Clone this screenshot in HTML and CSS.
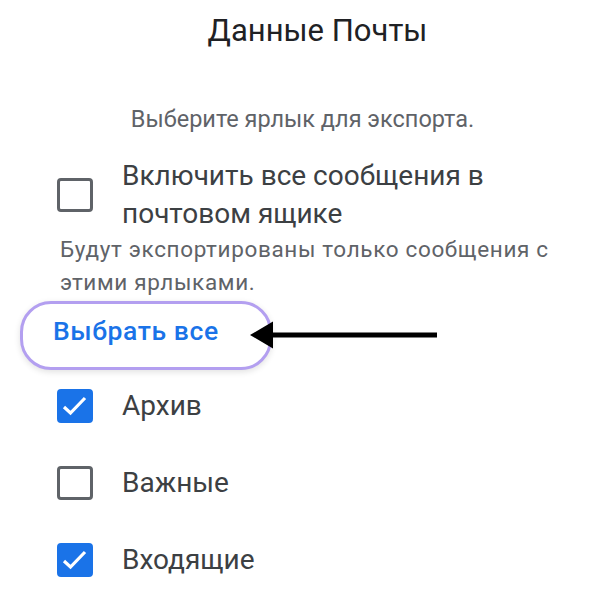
FILE: index.html
```html
<!DOCTYPE html>
<html>
<head>
<meta charset="utf-8" />
<title>Данные Почты</title>
<link rel="stylesheet" href="styles.css">
</head>
<body>
<div class="export">
	<h1 class="title">Данные Почты</h1>
	<p class="hint">Выберите ярлык для экспорта.</p>

	<label class="row row_all">
		<span class="box"></span>
		<span class="label">Включить все сообщения в почтовом ящике</span>
	</label>
	<p class="note">Будут экспортированы только сообщения с этими ярлыками.</p>

	<div class="selectall">
		<a class="pill" href="javascript:;">Выбрать все</a>
		<svg class="arrow" width="187" height="28" viewBox="0 0 187 28">
			<path d="M0 14 L23 0.5 L23 27.5 Z" fill="#000"/>
			<rect x="20" y="11.5" width="167" height="5" fill="#000"/>
		</svg>
	</div>

	<ul class="labels">
		<li class="row"><span class="box on"><svg width="30" height="29" viewBox="0 0 30 29"><path d="M4 15 L10.5 21 L25 6" fill="none" stroke="#fff" stroke-width="3.2"/></svg></span><span class="label">Архив</span></li>
		<li class="row"><span class="box"></span><span class="label">Важные</span></li>
		<li class="row"><span class="box on"><svg width="30" height="29" viewBox="0 0 30 29"><path d="M4 15 L10.5 21 L25 6" fill="none" stroke="#fff" stroke-width="3.2"/></svg></span><span class="label">Входящие</span></li>
	</ul>
</div>
</body>
</html>
```

FILE: styles.css
```css
*{margin:0;padding:0;box-sizing:border-box;}
body{background:#fff;font-family:Roboto,"Noto Sans",sans-serif;color:#3c4043;}
ul{list-style:none;}

.export{width:605px;height:600px;overflow:hidden;padding:0 0 0 57px;}
.title{font-weight:400;font-size:31px;color:#202124;text-align:center;padding:11px 0 0 30px;margin-left:-57px;line-height:40px;}
.hint{font-size:23.5px;color:#5f6368;text-align:center;margin:53px 0 0 -57px;line-height:30px;}

.row{display:flex;align-items:center;}
.box{flex:none;width:36px;height:34px;border:3px solid #5f6368;border-radius:4px;margin-right:29px;}
.box.on{background:#1a73e8;border-color:#1a73e8;}
.box svg{display:block;}
.label{font-size:28px;line-height:38px;}

.row_all{margin-top:23px;}
.row_all .label{width:400px;}
.note{font-size:22.5px;letter-spacing:0.65px;color:#5f6368;line-height:33px;margin:0 0 0 3px;width:510px;}

.selectall{position:relative;margin:2px 0 0 -37px;height:69px;}
.pill{display:block;height:69px;width:252px;padding:0 0 0 30px;border:3px solid #b39ff0;border-radius:31px;box-shadow:0 2px 6px rgba(0,0,0,0.12);color:#1a73e8;font-size:26.5px;letter-spacing:0.6px;font-weight:500;line-height:54px;text-decoration:none;background:#fff;}
.arrow{position:absolute;left:230px;top:20px;}

.labels{margin-top:-3px;}
.labels .row{height:77px;}
```
